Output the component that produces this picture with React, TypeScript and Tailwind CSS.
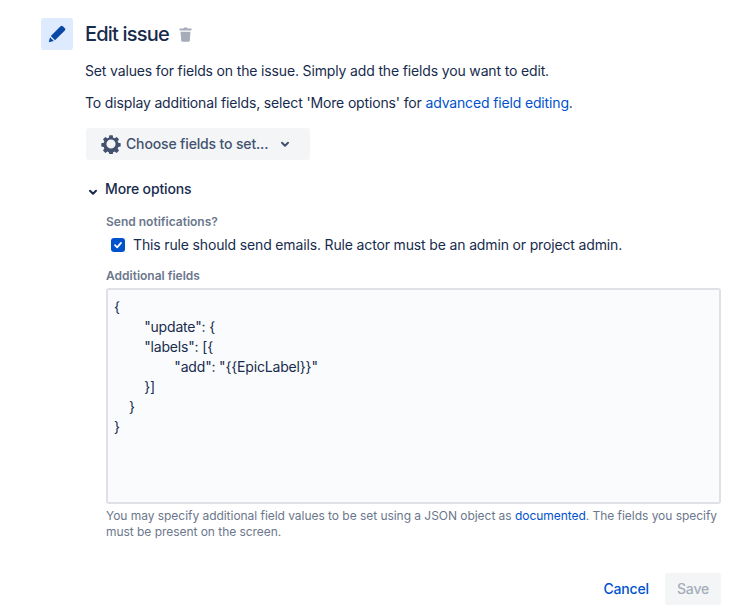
const JSON_TEXT = `{
        "update": {
        "labels": [{
                "add": "{{EpicLabel}}"
        }]
    }
}`;

function PencilIcon() {
  return (
    <svg width="20" height="20" viewBox="0 0 20 20" fill="#0747a6">
      <path d="M13.6 2.2a1.6 1.6 0 0 1 2.2 0l2 2a1.6 1.6 0 0 1 0 2.2L8 16.2 3.8 12z" />
      <path d="M3 13.2 6.8 17l-5 1.2z" />
    </svg>
  );
}

function TrashIcon() {
  return (
    <svg width="19" height="19" viewBox="0 0 16 16" fill="#a5adba">
      <path d="M3 3h3.2l.6-.9h2.400l.6.9H13v1.700H3z" />
      <path d="M3.800 5.600h8.400l-.6 7.600a1 1 0 0 1-1 .8H5.400a1 1 0 0 1-1-.8z" />
    </svg>
  );
}

function GearIcon() {
  return (
    <svg width="20" height="20" viewBox="0 0 24 24" fill="#42526e">
      <path
        fillRule="evenodd"
        d="M10 1.500h4l.6 2.900 1.700.7 2.500-1.600 2.800 2.800-1.600 2.500.7 1.700 2.900.6v4l-2.900.6-.7 1.700 1.600 2.500-2.800 2.800-2.500-1.600-1.700.7-.6 2.900h-4l-.6-2.900-1.700-.7-2.500 1.600-2.800-2.800 1.600-2.500-.7-1.700-2.900-.6v-4l2.900-.6.7-1.700-1.600-2.500 2.800-2.800 2.500 1.600 1.700-.7zM12 6.500a5.500 5.500 0 1 0 0 11 5.500 5.500 0 0 0 0-11z"
      />
    </svg>
  );
}

function Chevron({ color }: { color: string }) {
  return (
    <svg width="16" height="16" viewBox="0 0 16 16" fill="none" stroke={color} strokeWidth="2" strokeLinecap="round" strokeLinejoin="round">
      <path d="M5 6.800 8 9.800l3-3" />
    </svg>
  );
}

export default function App() {
  return (
    <div className="h-[612px] w-[756px] overflow-hidden bg-white pt-[18px] pl-[41px] pr-[35px] font-['Inter',sans-serif] text-sm tracking-[-0.15px] text-[#172b4d]">
      <div className="flex gap-3">
        <div className="flex size-8 shrink-0 items-center justify-center rounded-[3px] bg-[#deebff]">
          <PencilIcon />
        </div>
        <div className="flex h-8 items-center">
          <h1 className="text-xl leading-8 font-medium tracking-[-0.8px]">Edit issue</h1>
          <span className="ml-[7px] flex">
            <TrashIcon />
          </span>
        </div>
      </div>

      <div className="ml-11">
        <p className="mt-[11px] leading-5">Set values for fields on the issue. Simply add the fields you want to edit.</p>
        <p className="mt-3 leading-5">
          To display additional fields, select 'More options' for <a className="text-[#0052cc]">advanced field editing</a>.
        </p>

        <button className="mt-[15px] ml-px flex h-8 w-[224px] items-center rounded-[3px] bg-[#f4f5f7] pl-[15px] text-[#42526e]">
          <GearIcon />
          <span className="ml-[5px] font-medium">Choose fields to set...</span>
          <span className="ml-[9px] flex">
            <Chevron color="#42526e" />
          </span>
        </button>

        <div className="mt-[19px] flex h-5 items-center font-medium">
          <span className="mt-[5px] flex">
            <Chevron color="#172b4d" />
          </span>
          <span className="ml-[4px]">More options</span>
        </div>

        <div className="ml-[21px]">
          <div className="mt-[15px] text-xs leading-4 font-semibold tracking-normal text-[#6b778c]">Send notifications?</div>
          <label className="mt-[5px] ml-[5px] flex h-5 items-center">
            <span className="flex size-[14px] items-center justify-center rounded-[3px] bg-[#0052cc]">
              <svg width="10" height="10" viewBox="0 0 10 10" fill="none" stroke="white" strokeWidth="1.800" strokeLinecap="round" strokeLinejoin="round">
                <path d="M2 5.200 4.200 7.300 8 2.900" />
              </svg>
            </span>
            <span className="ml-[8px]">This rule should send emails. Rule actor must be an admin or project admin.</span>
          </label>

          <div className="mt-[13px] text-xs leading-4 font-semibold tracking-normal text-[#6b778c]">Additional fields</div>
          <pre className="mt-[4px] h-[216px] w-[615px] rounded-[3px] border-2 border-[#dfe1e6] bg-[#fafbfc] px-[6px] pt-[7px] font-['Inter',sans-serif] text-sm leading-5 tracking-[-0.17px] text-[#172b4d]">
            {JSON_TEXT}
          </pre>
          <p className="mt-[4px] w-[615px] text-xs leading-4 tracking-[-0.04px] text-[#6b778c]">
            You may specify additional field values to be set using a JSON object as <a className="text-[#0052cc]">documented</a>. The fields you specify must be present on the screen.
          </p>
        </div>
      </div>

      <div className="mt-[33px] flex justify-end gap-1">
        <button className="h-8 px-3 font-medium text-[#0052cc]">Cancel</button>
        <button className="h-8 w-14 rounded-[3px] bg-[#f4f5f7] font-medium text-[#a5adba]">Save</button>
      </div>
    </div>
  );
}
